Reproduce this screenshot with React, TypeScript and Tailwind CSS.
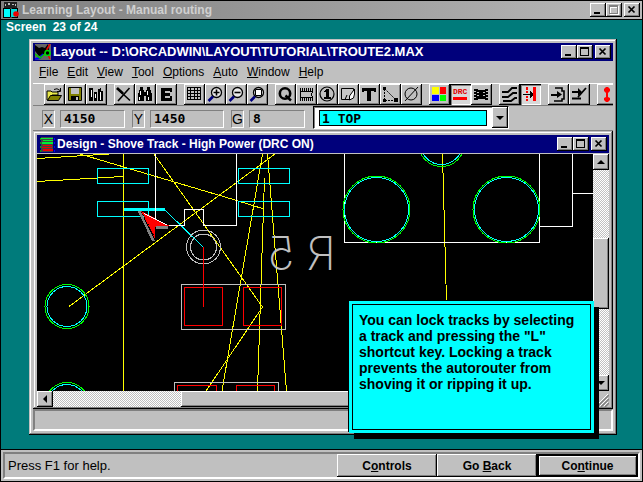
import { type ReactNode } from "react";

const bevel =
  "bg-[#c0c0c0] shadow-[inset_-1px_-1px_#000,inset_1px_1px_#fff,inset_-2px_-2px_#808080]";
const frame =
  "bg-[#c0c0c0] shadow-[inset_-1px_-1px_#000,inset_1px_1px_#c0c0c0,inset_-2px_-2px_#808080,inset_2px_2px_#fff]";
const track =
  "bg-[repeating-conic-gradient(#fff_0_25%,#c0c0c0_0_50%)] bg-[length:2px_2px]";

const WindowButtons = ({ dimmed }: { dimmed?: boolean }) => (
  <div className="flex shrink-0 pr-0.5">
    <button aria-label="Minimize" className={`${bevel} h-[14px] w-4`}>
      <svg viewBox="0 0 16 14" className="block h-full w-full" shapeRendering="crispEdges">
        <path d="M4 9h6v2H4z" />
      </svg>
    </button>
    <button aria-label="Maximize" className={`${bevel} h-[14px] w-4`}>
      <svg viewBox="0 0 16 14" className="block h-full w-full" shapeRendering="crispEdges">
        {dimmed && <path d="M4.5 3.5h8v8h-8zM4 4.5h9" fill="none" stroke="#fff" />}
        <path d="M3.5 2.5h8v8h-8zM3 3.5h9" fill="none" stroke={dimmed ? "#808080" : "#000"} />
      </svg>
    </button>
    <button aria-label="Close" className={`${bevel} ml-0.5 h-[14px] w-4`}>
      <svg viewBox="0 0 16 14" className="block h-full w-full">
        <path d="M4.5 3.5l6 6M10.5 3.5l-6 6" stroke="#000" strokeWidth="1.7" />
      </svg>
    </button>
  </div>
);

interface ToolButtonProps {
  label: string;
  pressed?: boolean;
  className?: string;
  children: ReactNode;
}

const ToolButton = ({ label, pressed, className = "", children }: ToolButtonProps) => (
  <button
    aria-label={label}
    aria-pressed={pressed}
    className={`h-[21px] w-[21px] shrink-0 ${
      pressed
        ? "bg-[#d8d8d8] shadow-[inset_1px_1px_#000,inset_2px_2px_#808080,inset_-1px_-1px_#fff]"
        : bevel
    } ${className}`}
  >
    <svg viewBox="0 0 21 21" className="block h-full w-full">
      {children}
    </svg>
  </button>
);

const Lens = ({ children }: { children: ReactNode }) => (
  <>
    <circle cx="11.5" cy="8.5" r="5" fill="#e8e8e8" stroke="#000" strokeWidth="1.3" />
    <path d="M8 12.5L3.5 17" stroke="#00007b" strokeWidth="2.6" />
    {children}
  </>
);

const Toolbar = () => (
  <div className="flex h-[23px] overflow-hidden border-t border-b border-t-white border-b-[#808080] pl-[11px]">
    <ToolButton label="Open">
      <path d="M3 7h4l1 1h6v3H8l-3 5H3z" fill="#e8e84a" stroke="#000" />
      <path d="M3.5 16.5l3-5h11l-3 5z" fill="#808000" stroke="#000" />
      <path d="M10 5.5q3-2 6 1M16.5 4v3.5H13" fill="none" stroke="#000" />
    </ToolButton>
    <ToolButton label="Save">
      <path d="M3.5 3.5h13v13h-13z" fill="#808000" stroke="#000" />
      <path d="M6 4h8v6H6z" fill="#c0c0c0" />
      <path d="M6 12h8v5H6z" />
      <path d="M11 13h2v3h-2z" fill="#c0c0c0" />
    </ToolButton>
    <ToolButton label="Library">
      <g shapeRendering="crispEdges">
        <path d="M3 4h4v13H3zM8 8h3v9H8zM12 5l3-1v13h-3zM15 7h2v10h-2z" />
        <path d="M5 6h1v7H5zM9 10h1v4H9zM14 8h1v8h-1z" fill="#fff" />
      </g>
    </ToolButton>
    <ToolButton label="Delete" className="ml-[7px]">
      <path d="M3 4.5l13 12M15.5 4L4 17" stroke="#000" strokeWidth="1.6" />
      <path d="M3 4l6 5.5" stroke="#000" strokeWidth="2.5" />
    </ToolButton>
    <ToolButton label="Find">
      <g shapeRendering="crispEdges">
        <path d="M5 3h3v3H5zM12 3h3v3h-3zM4 6h5v3H4zM11 6h5v3h-5zM3 9h6v8H3zM11 9h6v8h-6zM9 8h2v4H9z" />
        <path d="M5 7h1v4H5zM12 7h1v4h-1zM4 13h1v3H4zM13 13h1v3h-1z" fill="#fff" />
      </g>
    </ToolButton>
    <ToolButton label="Edit">
      <path d="M5 4h11v4h-2V7H9v2h5v3H9v2h5v-2h2v5H5z" shapeRendering="crispEdges" />
    </ToolButton>
    <ToolButton label="Spreadsheet" className="ml-[7px]">
      <path
        d="M3.5 3.5h13v12h-13zM3 6.5h14M3 9.5h14M3 12.5h14M6.5 3v13M10.5 3v13M13.5 3v13"
        fill="none"
        stroke="#000"
        shapeRendering="crispEdges"
      />
    </ToolButton>
    <ToolButton label="Zoom in">
      <Lens>
        <path d="M8.5 8.5h6M11.5 5.5v6" stroke="#000" strokeWidth="1.6" />
      </Lens>
    </ToolButton>
    <ToolButton label="Zoom out">
      <Lens>
        <path d="M8.5 8.5h6" stroke="#000" strokeWidth="1.6" />
      </Lens>
    </ToolButton>
    <ToolButton label="Zoom all">
      <Lens>
        <path d="M8.5 5.5h6v6h-6z" fill="#fff" stroke="#000" />
      </Lens>
    </ToolButton>
    <ToolButton label="Query" className="ml-[7px]">
      <circle cx="10" cy="9.5" r="5.2" fill="none" stroke="#000" strokeWidth="2.6" />
      <path d="M10.5 11.5l5.5 5" stroke="#000" strokeWidth="2.4" />
    </ToolButton>
    <ToolButton label="Component">
      <g shapeRendering="crispEdges">
        <path
          d="M4.5 4v3M6.5 4v3M8.5 4v3M10.5 4v3M12.5 4v3M14.5 4v3M16.5 4v3M4.5 14v3M6.5 14v3M8.5 14v3M10.5 14v3M12.5 14v3M14.5 14v3M16.5 14v3M4 7.5h13M4 13.5h13M4.5 7v7M16.5 7v2M15.5 9v3M16.5 12v2"
          fill="none"
          stroke="#000"
        />
      </g>
    </ToolButton>
    <ToolButton label="Pin">
      <circle cx="10" cy="10" r="7" fill="none" stroke="#000" strokeWidth="1.2" />
      <path d="M9 5h3v8h2v2H7v-2h2V8H7V7z" shapeRendering="crispEdges" />
    </ToolButton>
    <ToolButton label="Obstacle">
      <path d="M3.5 4.5h12v3l-4 8h-8z" fill="#c8c8c8" stroke="#000" />
      <path d="M16.5 5l-5 7v4l4-2 1-4z" fill="#fff" stroke="#000" />
      <path d="M9 11l-2 4.5h4" fill="none" stroke="#000" />
    </ToolButton>
    <ToolButton label="Text">
      <path d="M3 4h14v4h-2V7h-3v10H8V7H5v1H3z" shapeRendering="crispEdges" />
    </ToolButton>
    <ToolButton label="Connection">
      <path d="M4.5 5v11M5 5l11 11M5 16.5h11" fill="none" stroke="#000" strokeDasharray="2 1" />
      <path d="M3 3h3v3H3zM3 15h3v3H3zM14 14h4v4h-4z" />
    </ToolButton>
    <ToolButton label="Error">
      <circle cx="10" cy="10" r="6" fill="none" stroke="#000" />
      <path d="M4 17L17 3" stroke="#000" />
    </ToolButton>
    <ToolButton label="Color" className="ml-[7px]">
      <g shapeRendering="crispEdges">
        <path d="M3 3h7v7H3z" fill="#ff0" />
        <path d="M11 3h6v7h-6z" fill="#f00" />
        <path d="M3 11h7v6H3z" fill="#00f" />
        <path d="M11 11h6v6h-6z" fill="#0f0" />
      </g>
    </ToolButton>
    <ToolButton label="Online DRC" pressed>
      <text x="3" y="10" className="fill-[#e00000] font-['Liberation_Mono'] text-[8px] font-bold">
        DRC
      </text>
      <path d="M3 13h14v3H3z" fill="#f00" />
    </ToolButton>
    <ToolButton label="Reconnect">
      <path
        d="M3 5h4v1h7V5h3v2h-2v1h2v2h-2v1h2v2h-2v1h2v2h-3v-1H7v1H3v-2h2v-1H3v-2h2v-1H3V8h2V7H3z"
        shapeRendering="crispEdges"
      />
      <path d="M6 8.5h2M12 8.5h2M6 11.5h2M12 11.5h2" stroke="#c0c0c0" shapeRendering="crispEdges" />
    </ToolButton>
    <ToolButton label="Autopath" className="ml-[7px]">
      <path d="M3 8h6l4-4h5M3 13h6l5-4h4M4 17h8l4-3h2" fill="none" stroke="#000" strokeWidth="1.8" />
    </ToolButton>
    <ToolButton label="Shove track" pressed>
      <g shapeRendering="crispEdges">
        <path d="M13 3h3v14h-3z" fill="#f00" />
        <path d="M6 3h2v3H6zM6 7h2v2H6zM6 12h2v2H6zM6 15h2v2H6z" fill="#f00" />
        <path d="M3 10h9v1H3zM10 7h1v7h-1zM11 8h1v5h-1zM12 9h1v3h-1z" />
      </g>
    </ToolButton>
    <ToolButton label="Edit segment" className="ml-[7px]">
      <path d="M7 4h7v3h2v8h-2v2H6" fill="none" stroke="#000" strokeWidth="1.6" />
      <path d="M3 10h6V7l5 3.5L9 14v-2H3z" />
    </ToolButton>
    <ToolButton label="Add track">
      <path d="M3 7h6V4l4 4-4 4V9H3z" />
      <path d="M17 4l-8 9M3 14.5h9" stroke="#000" strokeWidth="1.8" />
    </ToolButton>
    <ToolButton label="Refresh" className="ml-[7px]">
      <path d="M9 3h2l2 2v2l-2 2v4l2 1v2l-2 2H9l-2-2v-2l2-1V9L7 7V5z" fill="#f00" />
    </ToolButton>
  </div>
);

const menu = ["File", "Edit", "View", "Tool", "Options", "Auto", "Window", "Help"];

const Field = ({ name, value, className }: { name: string; value: string; className: string }) => (
  <div className={`flex gap-[5px] ${className}`}>
    <label
      htmlFor={`field-${name}`}
      className="flex h-[18px] w-[13px] shrink-0 items-center justify-center border border-[#808080] border-r-white border-b-white text-[14px] leading-none"
    >
      {name}
    </label>
    <input
      id={`field-${name}`}
      readOnly
      value={value}
      className="h-[18px] w-full min-w-0 border border-[#808080] border-r-white border-b-white bg-transparent px-[3px] font-['DejaVu_Sans_Mono',monospace] text-[13px] font-bold outline-none"
    />
  </div>
);

const FieldBar = () => (
  <div className="flex h-[25px] items-start border-b border-[#808080] pt-1 pl-[9px]">
    <Field name="X" value="4150" className="w-[83px]" />
    <Field name="Y" value="1450" className="ml-[7px] w-[92px]" />
    <Field name="G" value="8" className="ml-[7px] w-[74px]" />
    <div className="relative -mt-1 ml-2 h-[23px] w-[196px] border border-black border-r-white border-b-white bg-white pt-[3px] pr-[21px] pl-[5px] shadow-[inset_1px_1px_#808080]">
      <select
        aria-label="Layer"
        className="block h-4 w-full appearance-none border border-black bg-[#0ff] px-0.5 font-['DejaVu_Sans_Mono',monospace] text-[13px] leading-none font-bold outline-none"
      >
        <option>1 TOP</option>
      </select>
      <span className={`${bevel} pointer-events-none absolute inset-y-0 right-0 flex w-4 items-center justify-center`}>
        <svg viewBox="0 0 8 4" className="h-1 w-2">
          <path d="M0 0h8L4 4z" />
        </svg>
      </span>
    </div>
  </div>
);

// board view, drawn in the coordinates of the desktop
const Board = () => (
  <svg
    viewBox="37 154 556 237"
    preserveAspectRatio="xMinYMin slice"
    className="block h-full w-full bg-black"
    fill="none"
    shapeRendering="crispEdges"
  >
    <g stroke="#ff0">
      <path d="M37 158.5L109 154M37 181.5L123 176.5M123.5 154V391" />
      <path d="M80 154L230 198.5L264 209M154 154L262.5 307L206 391" />
      <path d="M69 306.5L275 154" />
      <path d="M262.5 154L222 391M264.5 178L257.5 391M267.5 154L286.5 391" />
      <path d="M442.5 154L446.5 302" />
    </g>
    <g stroke="#0ff">
      <path d="M97.5 168.5h51v15h-51zM97.5 201.5h51v15h-51zM238.5 168.5h51v15h-51zM238.5 201.5h51v15h-51z" />
      <path d="M165 210L203.5 247.5" />
      <path d="M124 209.5h41" strokeWidth="3" />
    </g>
    <g stroke="#fff">
      <path d="M155.5 154V225.5H184.5V209.5H203.5V225.5H236.5V154" />
      <path d="M344.5 154V242.5H539.5V154M572.5 154V226.5H539.5M572.5 193.5H593" />
    </g>
    <g stroke="#c0c0c0">
      <circle cx="203.5" cy="247" r="17" />
      <circle cx="203.5" cy="247" r="13" />
      <path d="M181.5 284.5h104v45h-104zM174.5 391V382.5h104V391" />
    </g>
    <g stroke="#f00">
      <path d="M184.5 287.5h38v38h-38zM243.5 287.5h38v38h-38z" />
      <path d="M177.5 391V385.5h39V391M236.5 391V385.5h38V391" />
      <path d="M203.5 247V307" />
    </g>
    <g stroke="#0f0">
      <circle cx="376.5" cy="209.5" r="33.5" />
      <circle cx="506.5" cy="209.5" r="33.5" />
      <circle cx="441.5" cy="143.5" r="23" />
      <circle cx="67" cy="306.5" r="22" />
      <circle cx="67" cy="404.5" r="22" />
    </g>
    <g stroke="#0ff">
      <circle cx="376.5" cy="209.5" r="32" />
      <circle cx="506.5" cy="209.5" r="32" />
      <circle cx="441.5" cy="143.5" r="21" />
      <circle cx="67" cy="306.5" r="20" />
      <circle cx="67" cy="404.5" r="20" />
    </g>
    <text
      transform="translate(336 270) scale(-1 1)"
      className="fill-[#c0c0c0] font-['Inter',sans-serif] text-[47px] font-extralight"
    >
      <tspan x="0">R</tspan>
      <tspan x="41">5</tspan>
    </text>
    <path d="M139 211L153.5 241M156 227.5H168" stroke="#808080" strokeWidth="2.5" />
    <path d="M141 211L170 226L155.5 226.5L154.5 238z" fill="#f00" />
    <path d="M144 213.5L167 225" stroke="#fff" />
    <path d="M143 215L154 236" stroke="#000" strokeDasharray="1 1" />
  </svg>
);

const ScrollArrow = ({ label, d, className }: { label: string; d: string; className: string }) => (
  <button aria-label={label} className={`${bevel} shrink-0 ${className}`}>
    <svg viewBox="0 0 16 16" className="block h-full w-full">
      <path d={d} />
    </svg>
  </button>
);

const DesignWindow = () => (
  <div className={`${frame} flex min-h-0 flex-1 flex-col px-1 pt-1 pb-0.5`}>
    <div className="flex h-[18px] shrink-0 items-center bg-[#00007b] pl-[3px] text-white">
      <svg viewBox="0 0 15 15" className="h-[15px] w-[15px]" shapeRendering="crispEdges">
        <path d="M1 0h12v15H1z" fill="#444" />
        <path d="M1 1h12v1H1zM3 3h10v1H3zM2 5h11v2H2z" fill="#0e3" />
        <path d="M3 8h9v1H3zM2 10h10v1H2zM3 12h10v2H3z" fill="#e00" />
        <path d="M0 1h1v2H0zM0 5h1v2H0zM0 9h1v2H0zM0 13h1v2H0z" fill="#0a0" />
        <path d="M14 1h1v2h-1zM14 5h1v2h-1zM14 9h1v2h-1zM14 13h1v2h-1z" fill="#00f" />
      </svg>
      <h2 className="min-w-0 flex-1 truncate pl-0.5 text-[12px] font-bold">
        Design - Shove Track - High Power (DRC ON)
      </h2>
      <WindowButtons />
    </div>
    <div className="grid min-h-0 flex-1 grid-cols-[minmax(0,1fr)_16px] grid-rows-[minmax(0,1fr)_16px] border-t border-[#c0c0c0]">
      <div className="min-h-0 overflow-hidden">
        <Board />
      </div>
      <div className={`${track} flex flex-col`}>
        <ScrollArrow label="Scroll up" d="M4 10h8L8 6z" className="h-4" />
        <div className="flex min-h-0 flex-1 flex-col pt-[68px] pb-[66px]">
          <div className={`${bevel} flex-1`} />
        </div>
        <ScrollArrow label="Scroll down" d="M4 6h8l-4 4z" className="h-4" />
      </div>
      <div className={`${track} flex`}>
        <ScrollArrow label="Scroll left" d="M10 4v8L6 8z" className="w-4" />
        <div className="flex-1 pl-32">
          <div className={`${bevel} h-full w-[200px]`} />
        </div>
        <ScrollArrow label="Scroll right" d="M6 4v8l4-4z" className="w-4" />
      </div>
      <svg viewBox="0 0 16 16" className="block h-4 w-4">
        <path d="M4 16L16 4M8 16l8-8M12 16l4-4" stroke="#808080" strokeWidth="1.5" />
        <path d="M3 15L15 3M7 15l8-8M11 15l4-4" stroke="#fff" />
      </svg>
    </div>
  </div>
);

const LayoutWindow = () => (
  <section className={`${frame} mr-[25px] mb-[14px] ml-7 flex min-h-0 flex-1 flex-col p-1`}>
    <div className="flex h-[18px] shrink-0 items-center bg-[#00007b] pl-0.5 text-white">
      <svg viewBox="0 0 16 16" className="h-4 w-4">
        <path d="M0 0h16v16H0z" fill="#666" />
        <path d="M0 1l4 3 3-1 3 1 3-4 1 6-3 3-4 2-3 1-4-5z" fill="#000" />
        <path d="M0 15l5-1 3-4" fill="none" stroke="#00f" strokeWidth="2" />
        <path d="M15 0l-3 5v4l3 6" fill="none" stroke="#e00" strokeWidth="1.5" />
        <path d="M0 10l5 4 5-4h6" fill="none" stroke="#0c0" strokeWidth="1.5" />
        <circle cx="12.5" cy="9" r="2.5" fill="#000" stroke="#0d0" strokeWidth="1.5" />
      </svg>
      <h1 className="min-w-0 flex-1 truncate pl-0.5 text-[13px] font-bold">
        Layout -- D:\ORCADWIN\LAYOUT\TUTORIAL\TROUTE2.MAX
      </h1>
      <WindowButtons />
    </div>
    <nav className="flex h-[22px] shrink-0 items-center gap-[9px] pl-1.5 text-[12px]">
      {menu.map((item) => (
        <button key={item}>
          <u>{item[0]}</u>
          {item.slice(1)}
        </button>
      ))}
    </nav>
    <Toolbar />
    <FieldBar />
    <DesignWindow />
    <div className="h-[22px] shrink-0 border-2 border-[#808080] border-r-white border-b-white" />
  </section>
);

const App = () => (
  <div className="flex h-screen flex-col overflow-hidden border border-black bg-[#007b7b] font-['Liberation_Sans',Arial,sans-serif] text-black">
    <header className="flex h-[19px] shrink-0 items-center border-b border-black bg-linear-to-r from-[#808080] to-[#b8b8b8] pl-0.5">
      <svg viewBox="0 0 16 16" className="h-4 w-4">
        <path d="M1 0h13v6H1z" fill="#222" />
        <path d="M2 2h1v2H2zM5 1h2v2H5zM9 2h2v1H9zM12 2h1v2h-1z" fill="#bbb" />
        <path d="M0 6h7l1 1 1-1h6v10H9l-1-1-1 1H0z" fill="#000" />
        <path d="M1 7h6v8H1z" fill="#0ff" />
        <path d="M8 7h6v8H8z" fill="#0dd" />
        <circle cx="13" cy="12" r="2.8" fill="#e00" />
      </svg>
      <p className="min-w-0 flex-1 truncate pl-[3px] text-[12px] font-bold text-[#d0d0d0]">
        Learning Layout - Manual routing
      </p>
      <WindowButtons dimmed />
    </header>

    <main className="relative flex min-h-0 flex-1 flex-col">
      <p className="h-[19px] shrink-0 pl-[5px] text-[12px] leading-[14px] font-bold whitespace-pre text-white">
        {"Screen  23 of 24"}
      </p>
      <LayoutWindow />
      <aside className="absolute right-12 bottom-4 h-[132px] w-[245px] border-[3px] border-[#0ff] bg-[#0ff] shadow-[-1px_-1px_#000,5px_6px_#000]">
        <p className="h-full border border-black px-1.5 py-[7px] text-[14px] leading-4 font-bold">
          You can lock tracks by selecting
          <br />a track and pressing the "L"
          <br />
          shortcut key. Locking a track
          <br />
          prevents the autorouter from
          <br />
          shoving it or ripping it up.
        </p>
      </aside>
    </main>

    <footer className="flex h-8 shrink-0 border-t border-black bg-[#c0c0c0] p-0.5">
      <div className="flex flex-1 border-2 border-[#808080] border-r-white border-b-white">
        <p className="flex-1 pl-[3px] text-[13px] leading-[23px]">Press F1 for help.</p>
        <div className="flex text-[12px] font-bold">
          <button className={`${bevel} w-[100px]`}>
            C<u>o</u>ntrols
          </button>
          <button className={`${bevel} w-[100px]`}>
            Go <u>B</u>ack
          </button>
          <button className="w-[101px] bg-[#c0c0c0] shadow-[inset_0_0_0_1px_#000,inset_-2px_-2px_#000,inset_2px_2px_#000,inset_3px_3px_#fff,inset_-3px_-3px_#808080]">
            Co<u>n</u>tinue
          </button>
        </div>
      </div>
    </footer>
  </div>
);

export default App;
